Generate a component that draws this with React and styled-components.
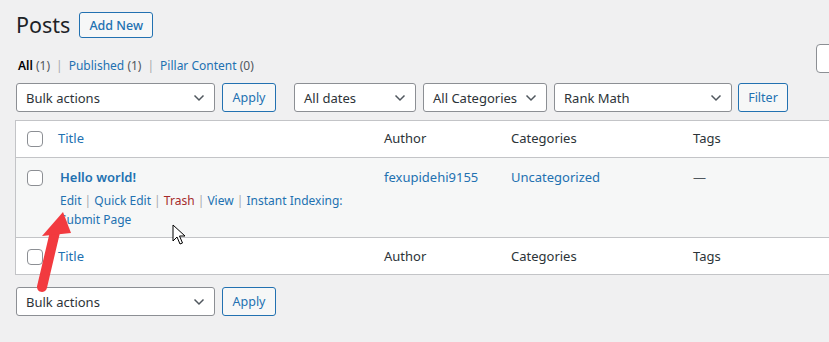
import React from 'react';
import styled, { createGlobalStyle } from 'styled-components';

const GlobalStyle = createGlobalStyle`
  html, body {
    margin: 0;
    padding: 0;
    background: #f0f0f1;
    overflow: hidden;
  }
  body {
    font-family: "Noto Sans", "Open Sans", sans-serif;
    color: #3c434a;
  }
`;

const Page = styled.div`
  position: relative;
  width: 1003px;
  padding: 12px 0 40px 15px;
`;

const Heading = styled.div`
  display: flex;
  align-items: center;
  height: 26px;
`;

const PageTitle = styled.h1`
  margin: 0 9px 0 1px;
  font-size: 21.5px;
  font-weight: 400;
  line-height: 26px;
  color: #1d2327;
`;

const AddNew = styled.a`
  display: inline-flex;
  align-items: center;
  height: 24px;
  padding: 0 9px;
  border: 1px solid #2271b1;
  border-radius: 3px;
  background: #f6f7f7;
  color: #2271b1;
  font-size: 12.5px;
  font-weight: 500;
`;

const SubRow = styled.div`
  display: flex;
  align-items: flex-start;
  margin-top: 6px;
  height: 31px;
`;

const SubSub = styled.ul`
  display: flex;
  margin: 13px 0 0 3px;
  padding: 0;
  list-style: none;
  font-size: 12px;
  line-height: 18px;
`;

const SubLink = styled.a`
  color: ${(p) => (p.current ? '#000' : '#2271b1')};
  font-weight: ${(p) => (p.current ? 600 : 400)};
`;

const Count = styled.span`
  color: #50575e;
  font-weight: 400;
`;

const Sep = styled.span`
  color: #a7aaad;
  margin: 0 6px;
`;

const Search = styled.div`
  margin-left: auto;
  width: 200px;
  height: 27px;
  border: 1px solid #8c8f94;
  border-radius: 4px;
  background: #fff;
`;

const Toolbar = styled.div`
  display: flex;
  align-items: center;
  margin-top: ${(p) => p.top}px;
  height: 29px;
`;

const SelectBox = styled.div`
  display: flex;
  align-items: center;
  box-sizing: border-box;
  width: ${(p) => p.w}px;
  height: 29px;
  margin: 0 ${(p) => p.gap || 7}px 0 ${(p) => p.lead || 0}px;
  padding: 0 9px 0 9px;
  border: 1px solid #8c8f94;
  border-radius: 3px;
  background: #fff;
  color: #2c3338;
  font-size: 13px;
  span {
    flex: 1;
    white-space: nowrap;
  }
`;

const Button = styled.button`
  box-sizing: border-box;
  width: ${(p) => p.w}px;
  height: 29px;
  padding: 0;
  margin-right: ${(p) => p.gap || 0}px;
  border: 1px solid #2271b1;
  border-radius: 3px;
  background: #f6f7f7;
  color: #2271b1;
  font-family: inherit;
  font-size: 12.5px;
`;

const Chevron = () => (
  <svg width="12" height="8" viewBox="0 0 12 8">
    <path d="M1.5 1.5 L6 6 L10.5 1.5" fill="none" stroke="#50575e" strokeWidth="1.5" />
  </svg>
);

const Select = ({ label, ...rest }) => (
  <SelectBox {...rest}>
    <span>{label}</span>
    <Chevron />
  </SelectBox>
);

const Table = styled.div`
  margin-top: 8px;
  border: 1px solid #c3c4c7;
  background: #fff;
`;

const Row = styled.div`
  display: grid;
  grid-template-columns: 42px 326px 127px 182px 1fr;
  box-sizing: border-box;
  height: ${(p) => p.h}px;
  background: ${(p) => (p.alt ? '#f6f7f7' : '#fff')};
  border-top: ${(p) => (p.first ? 'none' : '1px solid #c3c4c7')};
  font-size: 13px;
  line-height: 19px;
`;

const Cell = styled.div`
  padding-top: ${(p) => p.pt || 0}px;
  padding-left: ${(p) => p.pl || 0}px;
  padding-right: ${(p) => p.pr || 0}px;
  color: ${(p) => (p.link ? '#2271b1' : '#2c3338')};
`;

const Check = styled.span`
  display: block;
  box-sizing: border-box;
  width: 16px;
  height: 16px;
  margin: ${(p) => p.top}px 0 0 11px;
  border: 1px solid #8c8f94;
  border-radius: 4px;
  background: #fff;
`;

const PostTitle = styled.a`
  display: block;
  color: #2271b1;
  font-weight: 600;
  font-size: 13px;
`;

const RowActions = styled.div`
  margin-top: 4px;
  font-size: 12px;
  line-height: 19px;
  color: #a7aaad;
`;

const Action = styled.a`
  color: ${(p) => (p.danger ? '#a52a2b' : '#2271b1')};
`;

const Dash = styled.span`
  color: #50575e;
`;

const Overlay = styled.svg`
  position: absolute;
  left: 0;
  top: 0;
  pointer-events: none;
`;

const HeaderRow = ({ first }) => (
  <Row h={first ? 36 : 37} first={first}>
    <Cell><Check top={first ? 10 : 11} /></Cell>
    <Cell pt={first ? 8 : 9} link>Title</Cell>
    <Cell pt={first ? 8 : 9}>Author</Cell>
    <Cell pt={first ? 8 : 9}>Categories</Cell>
    <Cell pt={first ? 8 : 9}>Tags</Cell>
  </Row>
);

const BulkBar = ({ top }) => (
  <Toolbar top={top}>
    <Select label="Bulk actions" w={199} lead={1} />
    <Button w={54}>Apply</Button>
  </Toolbar>
);

export default function App() {
  return (
    <>
      <GlobalStyle />
      <Page>
        <Heading>
          <PageTitle>Posts</PageTitle>
          <AddNew>Add New</AddNew>
        </Heading>

        <SubRow>
          <SubSub>
            <li><SubLink current>All <Count>(1)</Count></SubLink><Sep>|</Sep></li>
            <li><SubLink>Published <Count>(1)</Count></SubLink><Sep>|</Sep></li>
            <li><SubLink>Pillar Content <Count>(0)</Count></SubLink></li>
          </SubSub>
          <Search />
        </SubRow>

        <Toolbar top={8}>
          <Select label="Bulk actions" w={199} lead={1} />
          <Button w={54} gap={18}>Apply</Button>
          <Select label="All dates" w={122} gap={7} />
          <Select label="All Categories" w={124} gap={7} />
          <Select label="Rank Math" w={178} gap={6} />
          <Button w={50}>Filter</Button>
        </Toolbar>

        <Table>
          <HeaderRow first />
          <Row h={80} alt>
            <Cell><Check top={12} /></Cell>
            <Cell pt={10} pl={2} pr={30}>
              <PostTitle>Hello world!</PostTitle>
              <RowActions>
                <Action>Edit</Action> | <Action>Quick Edit</Action> | <Action danger>Trash</Action> |{' '}
                <Action>View</Action> | <Action>Instant Indexing: Submit Page</Action>
              </RowActions>
            </Cell>
            <Cell pt={10} link>fexupidehi9155</Cell>
            <Cell pt={10} link>Uncategorized</Cell>
            <Cell pt={10}><Dash>—</Dash></Cell>
          </Row>
          <HeaderRow />
        </Table>

        <BulkBar top={12} />

        <Overlay width="829" height="342" viewBox="0 0 829 342">
          <line x1="55" y1="232" x2="42" y2="287" stroke="#f23a3f" strokeWidth="10" strokeLinecap="round" />
          <polygon points="63,212 42,236 71,233" fill="#f23a3f" />
          <path
            d="M173 225 L173 241 L177 237 L180 244 L182.5 243 L179.5 236 L185 236 Z"
            fill="#fff"
            stroke="#000"
            strokeWidth="1"
            strokeLinejoin="round"
          />
        </Overlay>
      </Page>
    </>
  );
}
